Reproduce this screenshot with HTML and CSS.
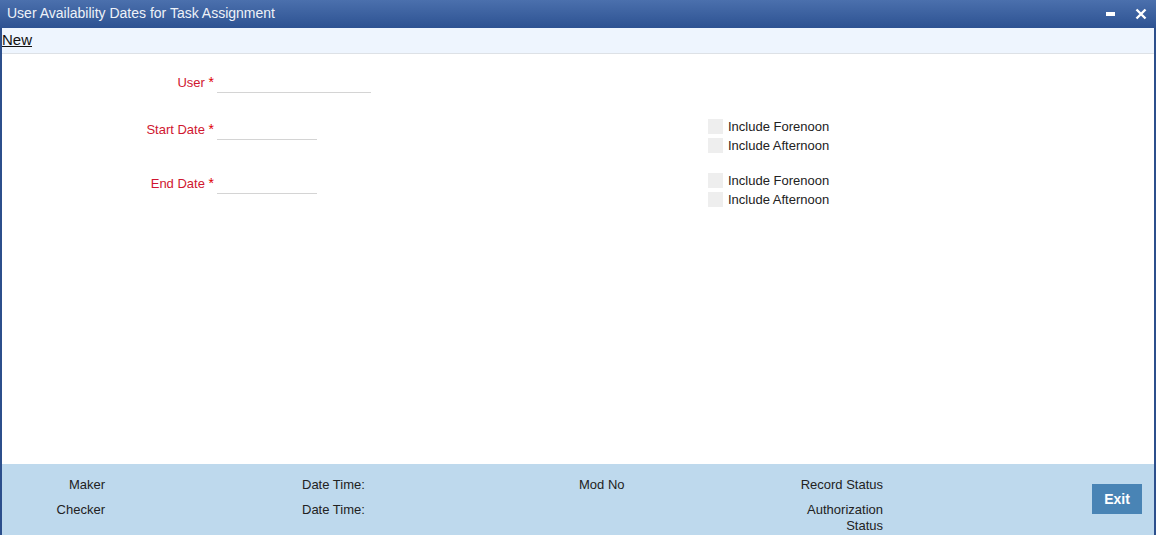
FILE: index.html
```html
<!DOCTYPE html>
<html lang="en">
<head>
  <meta charset="UTF-8" />
  <title>User Availability Dates for Task Assignment</title>
  <link rel="stylesheet" href="styles.css">
</head>
<body>
  <div class="window">
    <div class="title-bar">
      <span class="title">User Availability Dates for Task Assignment</span>
      <div class="win-btns">
        <span class="btn-min"></span>
        <svg class="btn-close" width="12" height="12" viewBox="0 0 12 12">
          <path d="M1.5 1.5 L10.5 10.5 M10.5 1.5 L1.5 10.5" stroke="#fff" stroke-width="2.4" />
        </svg>
      </div>
    </div>

    <div class="toolbar">
      <a href="#" class="tool-link">New</a>
    </div>

    <div class="content">
      <div class="form-row row-user">
        <label class="field-label">User <span class="req">*</span></label>
        <span class="input input-long"></span>
      </div>

      <div class="form-row row-start">
        <label class="field-label">Start Date <span class="req">*</span></label>
        <span class="input input-short"></span>
        <div class="checks">
          <div class="check"><span class="box"></span>Include Forenoon</div>
          <div class="check"><span class="box"></span>Include Afternoon</div>
        </div>
      </div>

      <div class="form-row row-end">
        <label class="field-label">End Date <span class="req">*</span></label>
        <span class="input input-short"></span>
        <div class="checks">
          <div class="check"><span class="box"></span>Include Forenoon</div>
          <div class="check"><span class="box"></span>Include Afternoon</div>
        </div>
      </div>
    </div>

    <div class="footer">
      <div class="audit">
        <div class="col col-who">
          <div>Maker</div>
          <div>Checker</div>
        </div>
        <div class="col col-time">
          <div>Date Time:</div>
          <div>Date Time:</div>
        </div>
        <div class="col col-mod">
          <div>Mod No</div>
        </div>
        <div class="col col-status">
          <div>Record Status</div>
          <div class="wrap">Authorization<br>Status</div>
        </div>
      </div>
      <button class="exit-btn">Exit</button>
    </div>
  </div>
</body>
</html>
```

FILE: styles.css
```css
html, body {
  margin: 0;
  padding: 0;
  background: #fff;
}
body {
  font-family: "Liberation Sans", Arial, sans-serif;
  font-size: 13px;
  color: #222;
}
.window {
  width: 1156px;
  height: 535px;
  box-sizing: border-box;
  border-left: 2px solid #2c4f8c;
  border-right: 2px solid #2c4f8c;
  display: flex;
  flex-direction: column;
}
.title-bar {
  height: 28px;
  flex: none;
  background: linear-gradient(#4b70ad, #2d5292);
  display: flex;
  align-items: center;
  justify-content: space-between;
  margin: 0 -2px;
  padding: 0 9px 0 7px;
}
.title {
  color: #eef2f8;
  font-size: 14px;
  margin-top: -3px;
}
.win-btns {
  display: flex;
  align-items: center;
  gap: 20px;
  margin-top: -1px;
}
.btn-min {
  width: 9px;
  height: 4px;
  background: #fff;
  margin-top: 1px;
}
.toolbar {
  height: 25px;
  flex: none;
  background: #eef5fe;
  border-bottom: 1px solid #dde1e6;
  display: flex;
  align-items: center;
}
.tool-link {
  font-size: 15px;
  color: #111;
  text-decoration: underline;
  margin-top: -2px;
}
.content {
  flex: 1;
  padding-top: 18px;
}
.form-row {
  display: flex;
  align-items: flex-start;
}
.field-label {
  width: 212px;
  text-align: right;
  color: #d01630;
  line-height: 20px;
  height: 20px;
}
.req {
  color: #e00000;
  font-size: 14px;
}
.input {
  display: block;
  height: 20px;
  border-bottom: 1px solid #d4d4d4;
  margin-left: 3px;
}
.input-long {
  width: 154px;
}
.input-short {
  width: 100px;
}
.row-start {
  margin-top: 26px;
}
.row-end {
  margin-top: 20px;
}
.checks {
  margin-left: 391px;
  display: flex;
  flex-direction: column;
  gap: 4px;
}
.check {
  display: flex;
  align-items: center;
  height: 15px;
  font-size: 13px;
  color: #222;
}
.box {
  width: 15px;
  height: 15px;
  background: #eeeeee;
  margin-right: 5px;
}
.footer {
  height: 71px;
  flex: none;
  background: #bed9ed;
  display: flex;
  align-items: flex-start;
}
.audit {
  display: flex;
  padding-top: 13px;
}
.col div {
  line-height: 16px;
  margin-bottom: 9px;
}
.col .wrap {
  margin-bottom: 0;
}
.col-who {
  width: 103px;
  text-align: right;
}
.col-time {
  margin-left: 197px;
  width: 100px;
}
.col-mod {
  margin-left: 177px;
  width: 100px;
}
.col-status {
  margin-left: 20px;
  width: 184px;
  text-align: right;
}
.exit-btn {
  margin-left: auto;
  margin-right: 12px;
  margin-top: 20px;
  width: 50px;
  height: 30px;
  border: none;
  background: #4984b5;
  color: #fff;
  font-family: "Liberation Sans", Arial, sans-serif;
  font-size: 14px;
  font-weight: bold;
  padding: 0;
}
```
